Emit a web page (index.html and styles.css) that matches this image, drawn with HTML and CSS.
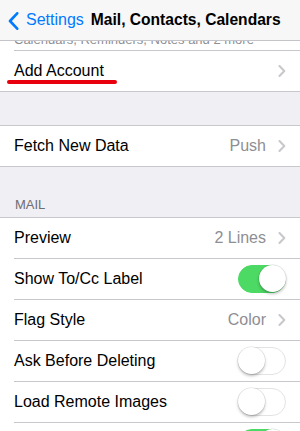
FILE: index.html
```html
<!DOCTYPE html>
<html>
<head>
<meta charset="utf-8">
<link rel="stylesheet" href="styles.css">
</head>
<body>
<div class="screen">
  <header class="nav">
    <svg class="back-chevron" width="11" height="18" viewBox="0 0 11 18"><path d="M9.2 1.3 L2 9 L9.2 16.7" fill="none" stroke="#007aff" stroke-width="2.6" stroke-linecap="round" stroke-linejoin="round"/></svg>
    <span class="back-label">Settings</span>
    <span class="nav-title">Mail, Contacts, Calendars</span>
  </header>

  <section class="group group-accounts">
    <div class="clipped-row"><span class="clipped-text">Calendars, Reminders, Notes and 2 more</span></div>
    <div class="row">
      <span class="label">Add Account</span>
      <span class="annot-underline"></span>
      <span class="accessory">
        <svg class="chev" width="8" height="12" viewBox="0 0 8 12"><path d="M1.5 1 L6.3 6 L1.5 11" fill="none" stroke="#c7c7cc" stroke-width="2" stroke-linecap="round" stroke-linejoin="round"/></svg>
      </span>
    </div>
  </section>

  <div class="gap gap-small"></div>

  <section class="group">
    <div class="row">
      <span class="label">Fetch New Data</span>
      <span class="accessory"><span class="value">Push</span>
        <svg class="chev" width="8" height="12" viewBox="0 0 8 12"><path d="M1.5 1 L6.3 6 L1.5 11" fill="none" stroke="#c7c7cc" stroke-width="2" stroke-linecap="round" stroke-linejoin="round"/></svg>
      </span>
    </div>
  </section>

  <div class="section-header">MAIL</div>

  <section class="group">
    <div class="row">
      <span class="label">Preview</span>
      <span class="accessory"><span class="value">2 Lines</span>
        <svg class="chev" width="8" height="12" viewBox="0 0 8 12"><path d="M1.5 1 L6.3 6 L1.5 11" fill="none" stroke="#c7c7cc" stroke-width="2" stroke-linecap="round" stroke-linejoin="round"/></svg>
      </span>
    </div>
    <div class="row">
      <span class="label">Show To/Cc Label</span>
      <span class="toggle on"><span class="knob"></span></span>
    </div>
    <div class="row">
      <span class="label">Flag Style</span>
      <span class="accessory"><span class="value">Color</span>
        <svg class="chev" width="8" height="12" viewBox="0 0 8 12"><path d="M1.5 1 L6.3 6 L1.5 11" fill="none" stroke="#c7c7cc" stroke-width="2" stroke-linecap="round" stroke-linejoin="round"/></svg>
      </span>
    </div>
    <div class="row">
      <span class="label">Ask Before Deleting</span>
      <span class="toggle"><span class="knob"></span></span>
    </div>
    <div class="row">
      <span class="label">Load Remote Images</span>
      <span class="toggle"><span class="knob"></span></span>
    </div>
    <div class="row">
      <span class="label">Organize By Thread</span>
      <span class="toggle on"><span class="knob"></span></span>
    </div>
  </section>
</div>
</body>
</html>
```
FILE: styles.css
```css
html, body {
  margin: 0;
  padding: 0;
  height: 431px;
  overflow: hidden;
  background: #efeff4;
}
.screen {
  width: 300px;
  font-family: "Liberation Sans", Arial, sans-serif;
  color: #000;
}
.nav {
  height: 40px;
  background: #f7f7f7;
  border-bottom: 1px solid #c4c4c8;
  display: flex;
  align-items: center;
  padding-left: 8px;
  box-sizing: content-box;
}
.back-chevron {
  flex: none;
  margin-top: 1px;
}
.back-label {
  color: #007aff;
  font-size: 16px;
  margin-left: 7px;
}
.nav-title {
  font-weight: bold;
  font-size: 15.6px;
  margin-left: 7px;
  white-space: nowrap;
}
.group {
  background: #fff;
  border-top: 1px solid #c8c7cc;
  border-bottom: 1px solid #c8c7cc;
}
.group-accounts {
  border-top: none;
}
.clipped-row {
  height: 10px;
  overflow: hidden;
  display: flex;
  align-items: flex-end;
  padding-left: 14px;
  position: relative;
}
.clipped-row::after {
  content: "";
  position: absolute;
  left: 14px;
  right: 0;
  bottom: 0;
  height: 1px;
  background: #c8c7cc;
}
.clipped-text {
  font-size: 13px;
  line-height: 13px;
  color: #8e8e93;
  white-space: nowrap;
  padding-bottom: 5px;
}
.row {
  position: relative;
  height: 40px;
  display: flex;
  align-items: center;
  justify-content: space-between;
  padding: 0 14px;
  font-size: 16px;
}
.row + .row::before {
  content: "";
  position: absolute;
  left: 14px;
  right: 0;
  top: -1px;
  height: 1px;
  background: #c8c7cc;
}
.row + .row {
  margin-top: 1px;
}
.label {
  white-space: nowrap;
}
.accessory {
  display: flex;
  align-items: center;
  gap: 12px;
}
.value {
  color: #8e8e93;
}
.chev {
  display: block;
}
.annot-underline {
  position: absolute;
  left: 7px;
  top: 29px;
  width: 110px;
  height: 4px;
  border-radius: 2px;
  background: #e8000e;
}
.gap-small {
  height: 33px;
}
.section-header {
  height: 50px;
  box-sizing: border-box;
  padding: 31px 0 0 15px;
  font-size: 13px;
  line-height: 13px;
  color: #6d6d72;
}
.toggle {
  position: relative;
  width: 48px;
  height: 28px;
  box-sizing: border-box;
  border-radius: 14px;
  border: 1.5px solid #e3e3e6;
  background: #fff;
  flex: none;
}
.toggle .knob {
  position: absolute;
  top: -1px;
  left: -1px;
  width: 27px;
  height: 27px;
  border-radius: 50%;
  background: #fff;
  box-shadow: 0 2px 3px rgba(0,0,0,0.25), 0 0 0 0.5px rgba(0,0,0,0.12);
}
.toggle.on {
  background: #4cd964;
  border-color: #4cd964;
}
.toggle.on .knob {
  left: auto;
  right: -1px;
}
```
